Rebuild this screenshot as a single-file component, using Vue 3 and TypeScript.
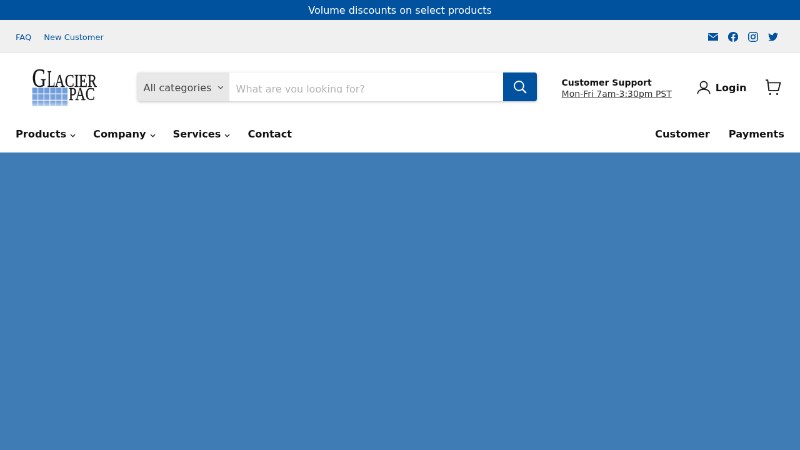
<script setup lang="ts">
const utilLinks: string[] = ['FAQ', 'New Customer']
const navLeft: { label: string; caret: boolean }[] = [
  { label: 'Products', caret: true },
  { label: 'Company', caret: true },
  { label: 'Services', caret: true },
  { label: 'Contact', caret: false },
]
const navRight: string[] = ['Customer', 'Payments']
const cells: { x: number; y: number }[] = []
for (let r = 0; r < 3; r++) for (let c = 0; c < 6; c++) cells.push({ x: 1 + c * 6, y: 21.5 + r * 6.4 })
</script>

<template>
  <div class="viewport">
  <div class="page">
    <div class="announce">Volume discounts on select products</div>
    <div class="util">
      <div class="util-links">
        <a v-for="l in utilLinks" :key="l" class="util-link">{{ l }}</a>
      </div>
      <div class="social">
        <svg class="soc" viewBox="0 0 20 20"><path fill="#00529f" d="M0 2.500h20v15H0z"/><path fill="none" stroke="#f0f0f0" stroke-width="1.600" d="M0 4l10 7.500L20 4"/></svg>
        <svg class="soc" viewBox="0 0 20 20"><path fill="#00529f" d="M10 0a10 10 0 0 0-1.600 19.900v-7H5.900V10h2.500V7.800c0-2.500 1.500-3.900 3.800-3.900 1.100 0 2.200.2 2.200.2v2.500h-1.200c-1.200 0-1.600.8-1.600 1.600V10h2.800l-.4 2.900h-2.300v7A10 10 0 0 0 10 0z"/></svg>
        <svg class="soc" viewBox="0 0 20 20"><rect x="1" y="1" width="18" height="18" rx="5" fill="none" stroke="#00529f" stroke-width="2"/><circle cx="10" cy="10" r="4" fill="none" stroke="#00529f" stroke-width="2"/><circle cx="15" cy="5" r="1.200" fill="#00529f"/></svg>
        <svg class="soc" viewBox="0 0 24 24"><path fill="#00529f" d="M23.950 4.570a10 10 0 0 1-2.820.770 4.960 4.960 0 0 0 2.160-2.720c-.950.550-2 .950-3.130 1.180a4.920 4.920 0 0 0-8.380 4.480C7.690 8.100 4.060 6.130 1.640 3.160a4.820 4.820 0 0 0-.670 2.480c0 1.710.870 3.210 2.190 4.100a4.900 4.900 0 0 1-2.230-.620v.060a4.920 4.920 0 0 0 3.950 4.830 5 5 0 0 1-2.210.080 4.940 4.940 0 0 0 4.600 3.420A9.870 9.870 0 0 1 0 19.540a14 14 0 0 0 7.560 2.210c9.050 0 14-7.500 14-13.980 0-.210 0-.420-.020-.630a9.940 9.940 0 0 0 2.460-2.550z"/></svg>
      </div>
    </div>
    <header class="main">
      <svg class="logo" viewBox="0 0 66 42" aria-label="Glacier Pac">
        <defs>
          <linearGradient id="ice" gradientUnits="userSpaceOnUse" x1="0" y1="21" x2="0" y2="42">
            <stop offset="0" stop-color="#6f9ada"/>
            <stop offset="0.700" stop-color="#7ea6de"/>
            <stop offset="1" stop-color="#e6eef9"/>
          </linearGradient>
        </defs>
        <g fill="url(#ice)">
          <rect v-for="(c, i) in cells" :key="i" :x="c.x" :y="c.y" width="5.300" height="5.700"/>
        </g>
        <text transform="translate(1 20.500) scale(.72 1)" class="lg lg-big">G</text>
        <text transform="translate(16 20.500) scale(.55 1)" class="lg lg-l">L</text>
        <text transform="translate(23.500 20.500) scale(.78 1)" class="lg lg-small">ACIER</text>
        <text transform="translate(37.500 33.500) scale(.74 1)" class="lg lg-pac">PAC</text>
      </svg>
      <form class="search" @submit.prevent>
        <div class="cat">All categories<svg class="caret-s" viewBox="0 0 8 6"><path d="M1 1.500l3 3 3-3" fill="none" stroke="currentColor" stroke-width="1.100"/></svg></div>
        <div class="field"><span class="placeholder">What are you looking for?</span></div>
        <button class="go" type="button" aria-label="Search">
          <svg viewBox="0 0 16 16" width="22" height="22"><circle cx="6.800" cy="6.800" r="5.400" fill="none" stroke="#fff" stroke-width="1.400"/><path d="M10.800 10.800l4.400 4.400" stroke="#fff" stroke-width="1.600"/></svg>
        </button>
      </form>
      <div class="support">
        <strong>Customer Support</strong>
        <a>Mon-Fri 7am-3:30pm PST</a>
      </div>
      <a class="login">
        <svg viewBox="0 0 16 16" width="22" height="22"><circle cx="8" cy="5" r="4" fill="none" stroke="#1a1a1a" stroke-width="1.300"/><path d="M1 15.500c0-3.500 3-5.500 7-5.500s7 2 7 5.500" fill="none" stroke="#1a1a1a" stroke-width="1.300"/></svg>
        <span>Login</span>
      </a>
      <svg class="cart" viewBox="0 0 16 16" width="26" height="26"><path d="M.6.800h2l1.300 10.200h9.200l1.900-7.700H3.200" fill="none" stroke="#1a1a1a" stroke-width="1.200"/><circle cx="5" cy="14.400" r="1" fill="#1a1a1a"/><circle cx="12" cy="14.400" r="1" fill="#1a1a1a"/></svg>
    </header>
    <nav class="nav">
      <div class="nav-group left">
        <a v-for="n in navLeft" :key="n.label" class="nav-item">{{ n.label }}<svg v-if="n.caret" class="caret-n" viewBox="0 0 8 6"><path d="M1 1.500l3 3 3-3" fill="none" stroke="#222" stroke-width="1.400"/></svg></a>
      </div>
      <div class="nav-group right">
        <a v-for="n in navRight" :key="n" class="nav-item">{{ n }}</a>
      </div>
    </nav>
    <main class="hero"></main>
  </div>
  </div>
</template>

<style scoped>
.viewport { width: 800px; height: 450px; overflow: hidden; }
.page { width: 1280px; height: 720px; transform: scale(.625); transform-origin: 0 0; will-change: transform; display: flex; flex-direction: column; overflow: hidden; background: #fff; font-family: "DejaVu Sans", sans-serif; color: #111; }
.announce { height: 32px; background: #00529f; color: #fff; font-size: 16px; line-height: 34px; text-align: center; flex: none; }
.util { background: #f0f0f0; border-bottom: 1px solid #e6e6e6; display: flex; justify-content: space-between; align-items: center; padding: 2px 35px 0 25px; box-sizing: border-box; height: 53px; flex: none; }
.util-links { display: flex; gap: 20px; }
.util-link { font-size: 13px; color: #00529f; }
.social { display: flex; gap: 16px; align-items: center; }
.soc { width: 16px; height: 16px; }
.main { height: 110px; display: flex; align-items: center; padding: 0 30px 0 50px; flex: none; }
.logo { width: 105.600px; height: 67.200px; flex: none; overflow: visible; }
.lg { font-family: "Liberation Serif", serif; fill: #111; stroke: #111; stroke-width: .2px; }
.lg-big { font-size: 27px; }
.lg-l { font-size: 24px; }
.lg-small { font-size: 18px; }
.lg-pac { font-size: 19px; }
.search { display: flex; width: 639px; height: 46px; margin-left: 64px; flex: none; border-radius: 4px; box-shadow: 0 1px 4px rgba(0,0,0,.25); margin-top: -2px; }
.cat { width: 147px; box-sizing: border-box; padding: 2px 0 0 10px; background: #e8e8e8; color: #444; font-size: 16px; display: flex; align-items: center; border-radius: 4px 0 0 4px; flex: none; white-space: nowrap; }
.caret-s { width: 10px; height: 8px; margin-left: 10px; }
.field { flex: 1; background: #fff; display: flex; align-items: center; padding-left: 11px; height: 100%; }
.placeholder { font-size: 16px; line-height: 19px; height: 16px; overflow: hidden; color: #b3b3b3; margin-top: 3px; }
.go { width: 54px; background: #00529f; border: 0; padding: 0; display: flex; align-items: center; justify-content: center; border-radius: 0 4px 4px 0; flex: none; }
.support { margin-left: 40px; display: flex; flex-direction: column; line-height: 18px; flex: none; margin-top: 2px; }
.support strong { font-weight: 700; font-size: 14px; }
.support a { text-decoration: underline; color: #333; font-size: 14px; }
.login { display: flex; align-items: center; gap: 8px; margin-left: 40px; font-weight: 700; font-size: 16px; flex: none; }
.cart { margin-left: 30px; flex: none; }
.nav { height: 49px; display: flex; justify-content: space-between; align-items: flex-start; padding: 7px 25px 0 25px; box-sizing: border-box; flex: none; }
.nav-group { display: flex; }
.left { gap: 28px; }
.right { gap: 30px; }
.nav-item { font-size: 16.200px; font-weight: 700; line-height: 26px; display: flex; align-items: center; white-space: nowrap; }
.caret-n { width: 9px; height: 8px; margin-left: 6px; margin-top: 3px; }
.hero { flex: 1; background: #3f7cb6; }
</style>
